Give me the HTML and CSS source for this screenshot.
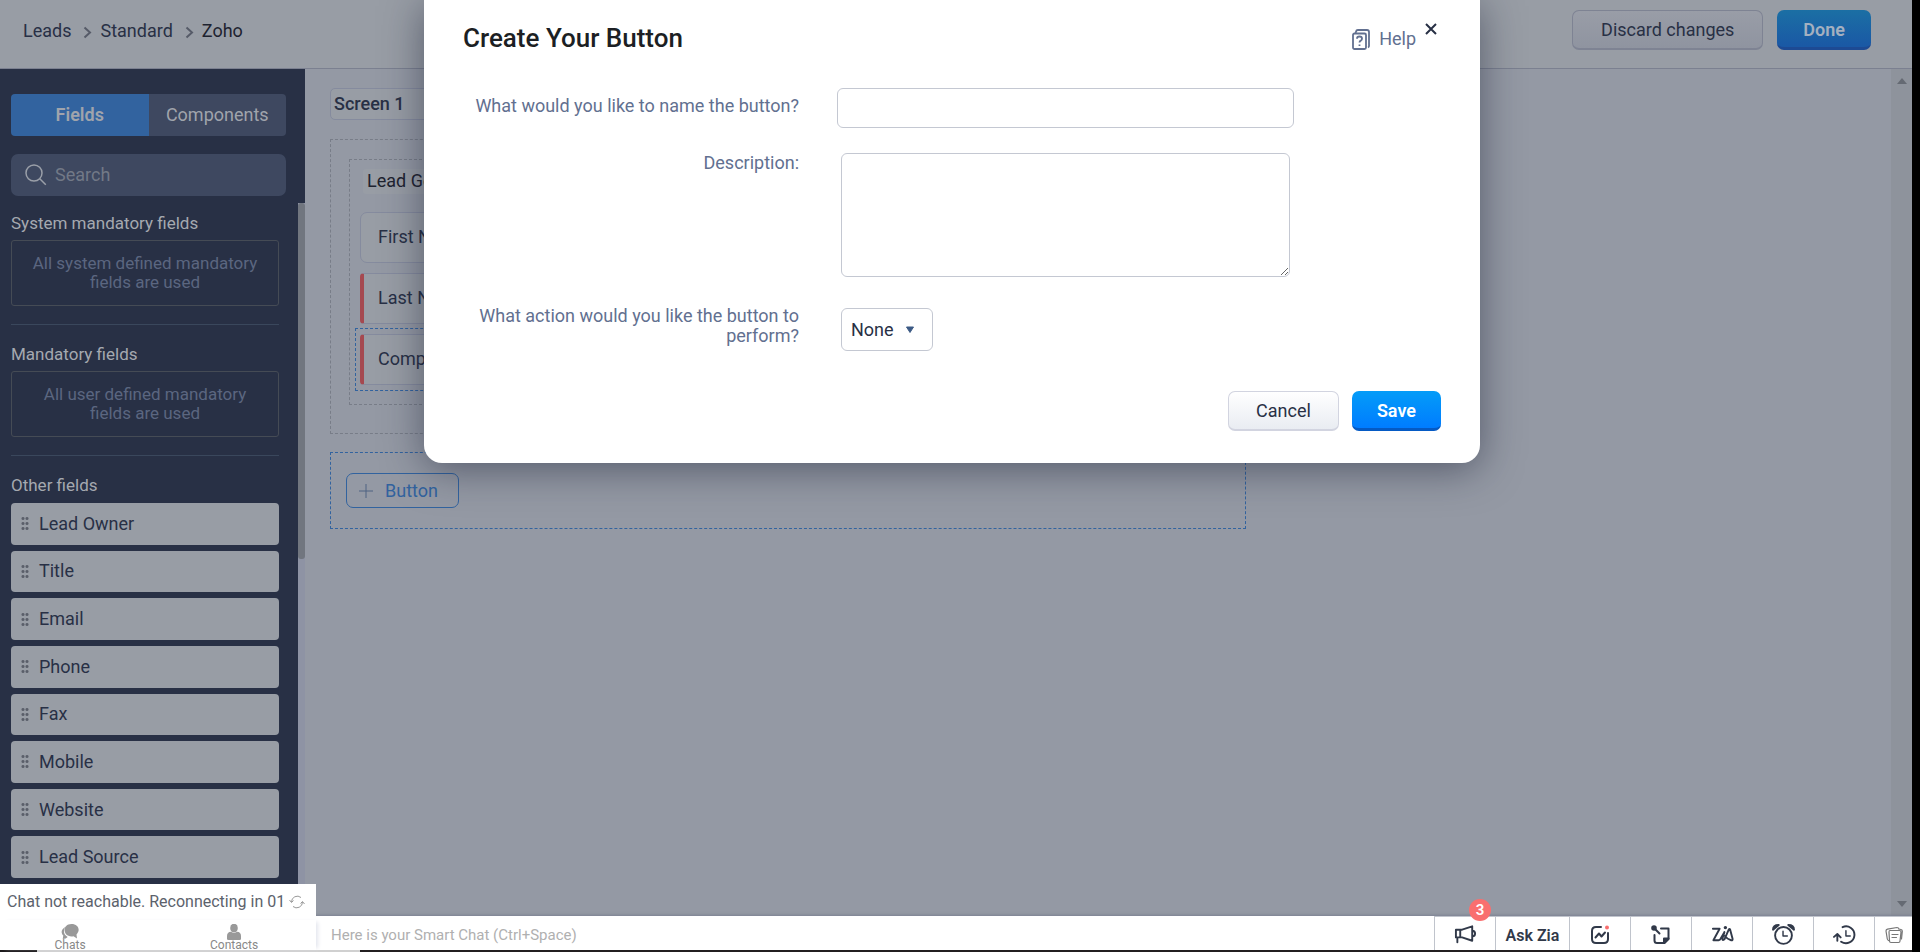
FILE: index.html
```html
<!DOCTYPE html>
<html lang="en">
<head>
<meta charset="utf-8">
<title>Create Your Button</title>
<link rel="stylesheet" href="styles.css">
</head>
<body>
<div class="app">
  <header class="topbar">
    <nav class="crumbs" aria-label="Breadcrumb">
      <a href="#">Leads</a>
      <svg class="chevron" viewBox="0 0 9 13"><path d="M1.500 1.500l5.500 5-5.500 5"/></svg>
      <a href="#">Standard</a>
      <svg class="chevron" viewBox="0 0 9 13"><path d="M1.500 1.500l5.500 5-5.500 5"/></svg>
      <a class="current" href="#">Zoho</a>
    </nav>
    <div class="topbar-actions">
      <button class="btn-discard" type="button">Discard changes</button>
      <button class="btn-done" type="button">Done</button>
    </div>
  </header>

  <div class="workspace">
    <aside class="sidebar">
      <div class="sidebar-head">
        <div class="tabs">
          <button class="tab active" type="button">Fields</button>
          <button class="tab" type="button">Components</button>
        </div>
        <label class="search">
          <svg viewBox="0 0 22 22"><circle cx="9" cy="9" r="8"/><path d="M14.800 14.800l6 6"/></svg>
          <input type="search" placeholder="Search" aria-label="Search">
        </label>
      </div>
      <div class="sidebar-body">
        <div class="field-groups">
          <section class="group">
            <h2>System mandatory fields</h2>
            <p class="empty">All system defined mandatory fields are used</p>
          </section>
          <section class="group">
            <h2>Mandatory fields</h2>
            <p class="empty">All user defined mandatory fields are used</p>
          </section>
          <section class="group others">
            <h2>Other fields</h2>
            <ul class="field-list">
              <li><i class="grip"></i>Lead Owner</li>
              <li><i class="grip"></i>Title</li>
              <li><i class="grip"></i>Email</li>
              <li><i class="grip"></i>Phone</li>
              <li><i class="grip"></i>Fax</li>
              <li><i class="grip"></i>Mobile</li>
              <li><i class="grip"></i>Website</li>
              <li><i class="grip"></i>Lead Source</li>
            </ul>
          </section>
        </div>
        <div class="side-scroll"><div class="side-thumb"></div></div>
      </div>
    </aside>

    <main class="canvas">
      <div class="canvas-inner">
        <input class="screen-name" type="text" value="Screen 1" aria-label="Screen name">
        <section class="zone">
          <div class="zone-inner">
            <h3 class="zone-title">Lead Generation</h3>
            <div class="slot"><div class="field">First Name</div></div>
            <div class="slot"><div class="field required">Last Name</div></div>
            <div class="slot selected"><div class="field required">Company</div></div>
          </div>
        </section>
        <section class="zone-buttons">
          <button class="add-button" type="button">
            <svg viewBox="0 0 14 14"><path d="M7 0v14M0 7h14"/></svg>Button
          </button>
        </section>
      </div>
      <div class="page-scroll">
        <svg viewBox="0 0 10 6"><path d="M0 6l5-6 5 6z"/></svg>
        <svg viewBox="0 0 10 6"><path d="M0 0l5 6 5-6z"/></svg>
      </div>
    </main>
  </div>

  <footer class="dock">
    <input class="smart-chat" type="text" placeholder="Here is your Smart Chat (Ctrl+Space)" aria-label="Smart Chat">
    <div class="dock-tools">
      <button class="tool announce" type="button" aria-label="Announcements">
        <svg viewBox="0 0 24 20"><path d="M2 5h6.500L19 1.500v15L8.500 13H2zM6.500 5v8M3.500 13v5M19 6c4 0 4 6 0 6"/></svg>
        <span class="badge">3</span>
      </button>
      <button class="tool zia-text" type="button">Ask Zia</button>
      <button class="tool" type="button" aria-label="Insights">
        <svg viewBox="0 0 20 20"><path d="M11 2H6Q2 2 2 6v8q0 4 4 4h8q4 0 4-4V8M5.500 12.500l3.500-4 2.500 3 3.500-4"/><circle class="dot" cx="17" cy="2.500" r="2"/></svg>
      </button>
      <button class="tool" type="button" aria-label="Sticky notes">
        <svg viewBox="0 0 20 20"><path d="M10 3.500h7.500V14l-4 4H6q-2.500 0-2.500-2.500V10M3 3l5.500 5.500"/><path class="solid" d="M17.500 13.500h-4.500v4.500z"/><circle class="solid" cx="3" cy="3" r="1.800"/></svg>
      </button>
      <button class="tool" type="button" aria-label="Zia">
        <svg class="wide" viewBox="0 0 24 20"><path d="M2 4h7L2.500 16H8q1.500 0 2-1.500L14 7.500l-2 6.500q-.5 3 2 1L18.500 5q.8-1.500 1.500 0l2.500 9.500q.3 2-1.500 1.500-4-1-6.500-4.500"/><circle class="solid" cx="15" cy="2.800" r=".8"/></svg>
      </button>
      <button class="tool" type="button" aria-label="Reminders">
        <svg class="wide" viewBox="0 0 24 22"><circle cx="12" cy="12" r="8.800"/><path class="thin" d="M11.500 7.500v5h4.500"/><path class="solid" d="M1 6q0-5 6-5zM23 6q0-5-6-5z"/></svg>
      </button>
      <button class="tool" type="button" aria-label="Recent">
        <svg class="wide" viewBox="0 0 24 22"><path d="M10 3.300A8.800 8.800 0 1 1 8.500 18.500M4.500 17.500V11M1 13.500L4.500 10.500 8 14"/><path class="thin" d="M13.500 7v5.500H18"/></svg>
      </button>
      <button class="tool notes" type="button" aria-label="Notes">
        <svg viewBox="0 0 18 18"><path d="M5 4.500h9.500q1.500 0 1.500 1.500l-1 9q0 1.500-1.500 1.500H6Q4.500 16.500 4.500 15l-.5-9q0-1.500 1-1.500zM3.500 14.500Q2.500 14 2.300 13L1 5Q1 3.500 2.500 3.200L12 1.500q1.500 0 2 1.500M13.500 3l2.500 .5q1.500 .5 1.300 2L16.500 13M7 8.500h6M7 11.500h4.500"/></svg>
      </button>
    </div>
  </footer>

  <aside class="chat-panel">
    <p class="chat-status">Chat not reachable. Reconnecting in 01
      <svg viewBox="0 0 16 16"><path d="M2.500 8A5.800 5.800 0 0 1 12 3.500M13.500 8A5.800 5.800 0 0 1 4 12.500M.5 6l2 2.500 2-2M11.500 9.500l2-2 2 2.500"/></svg>
    </p>
    <div class="chat-tabs">
      <a href="#"><svg viewBox="0 0 18 16"><path d="M4.300 3C-1 6 .5 10 2.300 11.500L1.700 15q3.500 0 5-2C2.500 11 2 6.500 4.300 3z"/><path d="M10.500 0C1 0 1.500 12.500 10.500 12.500q1 0 2-.2L16 14.500l-.5-4C20 6 17 0 10.500 0z"/></svg>Chats</a>
      <a href="#"><svg viewBox="0 0 18 16"><ellipse cx="9" cy="4" rx="3.800" ry="4.200"/><path d="M2 15v-3q0-4 4-4.200 3 2 6 0 4 .2 4 4.200v3q0 1-1.500 1h-11Q2 16 2 15z"/></svg>Contacts</a>
    </div>
  </aside>
  <div class="taskbar-edge"></div>

  <div class="overlay">
    <form class="dialog" role="dialog" aria-labelledby="dialog-title">
      <header class="dialog-head">
        <h1 id="dialog-title">Create Your Button</h1>
        <a class="help" href="#">
          <svg viewBox="0 0 18 21"><rect x="1" y="4.500" width="13" height="15.500" rx="1.500"/><path d="M3.500 4L4.500 1.500Q5 1 6 1h9q2 0 2 2v14q0 1-1 1.500M5 9.800q0-2.300 2.500-2.300t2.500 2.300q0 1.200-1.200 1.800-1.300 .6-1.300 1.900M7.500 15.500v1.500"/></svg>
          Help
        </a>
        <button class="close" type="button" aria-label="Close">
          <svg viewBox="0 0 12 12"><path d="M1 1l10 10M11 1L1 11"/></svg>
        </button>
      </header>
      <div class="row">
        <label for="btn-name">What would you like to name the button?</label>
        <input id="btn-name" class="name-input" type="text">
      </div>
      <div class="row">
        <label for="btn-desc">Description:</label>
        <textarea id="btn-desc" class="desc-input"></textarea>
      </div>
      <div class="row row-action">
        <label for="btn-action">What action would you like the button to perform?</label>
        <div class="select-wrap">
          <select id="btn-action"><option>None</option></select>
          <svg viewBox="0 0 10 8"><path d="M1.500 1h7L5 6.500z"/></svg>
        </div>
      </div>
      <div class="dialog-actions">
        <button class="btn-cancel" type="button">Cancel</button>
        <button class="btn-save" type="submit">Save</button>
      </div>
    </form>
  </div>
</div>
</body>
</html>
```

FILE: styles.css
```css
* { box-sizing: border-box; }

body {
  margin: 0;
  background: #000;
  color: #283045;
  font-family: Roboto, "Liberation Sans", sans-serif;
  font-size: 18px;
  line-height: 20px;
}

button, input, select, textarea { font: inherit; color: inherit; margin: 0; }
h1, h2, h3, p, ul { margin: 0; padding: 0; font-weight: 500; }
a { color: inherit; text-decoration: none; }
svg { display: block; fill: none; stroke: currentColor; flex: none; }

.app {
  position: relative;
  display: flex;
  flex-direction: column;
  height: 100vh;
  margin-right: 8px;
  overflow: hidden;
  background: #9499a4;
}

/* top bar */
.topbar {
  display: flex;
  justify-content: space-between;
  align-items: flex-start;
  flex: none;
  height: 69px;
  padding: 10px 41px 0 23px;
  background: #989da5;
  border-bottom: 1px solid #7b8090;
}
.crumbs { display: flex; align-items: center; height: 42px; }
.crumbs .current { color: #1e2330; }
.chevron { width: 9px; height: 13px; margin: 2px 8px 0 12px; stroke: #565b68; stroke-width: 2; }
.topbar-actions { display: flex; gap: 14px; }
.btn-discard, .btn-done { height: 40px; border-radius: 7px; }
.btn-discard {
  padding: 0 28px;
  background: linear-gradient(#999da7, #8f94a0);
  border: 1px solid #7e8393;
  border-bottom-width: 2px;
}
.btn-done {
  padding: 2px 26px 0;
  border: 0;
  border-bottom: 3px solid #1d4a93;
  background: linear-gradient(#1b6fa4, #1a58a5);
  color: #a4b0c0;
  font-weight: 600;
}

.workspace { display: flex; flex: 1; min-height: 0; }

/* sidebar */
.sidebar {
  display: flex;
  flex-direction: column;
  width: 305px;
  flex: none;
  background: #283045;
}
.sidebar-head { padding: 25px 19px 7px 11px; }
.tabs { display: flex; border-radius: 4px; overflow: hidden; }
.tab {
  flex: 1;
  height: 42px;
  padding: 0;
  border: 0;
  background: #3e4860;
  color: #a0a4ac;
}
.tab.active { background: #32639f; font-weight: 600; }
.search {
  display: flex;
  align-items: center;
  height: 42px;
  margin-top: 18px;
  padding: 0 14px;
  gap: 8px;
  border-radius: 7px;
  background: #3e4860;
}
.search svg { width: 22px; height: 22px; stroke: #9a9fa8; stroke-width: 1.500; }
.search input { flex: 1; min-width: 0; padding: 0; border: 0; outline: 0; background: none; }
.search input::placeholder { color: #727987; }

.sidebar-body { display: flex; flex: 1; min-height: 0; }
.field-groups {
  display: flex;
  flex-direction: column;
  flex: 1;
  padding: 9px 19px 38px 11px;
}
.group { border-bottom: 1px solid #3a475c; margin-bottom: 18px; padding-bottom: 18px; }
.group h2 { height: 28px; padding-top: 1px; font-size: 17px; line-height: 20px; font-weight: 400; color: #a5a9b0; }
.empty {
  height: 66px;
  padding: 13px 16px;
  border: 1px solid #454b55;
  border-radius: 3px;
  color: #5b6680;
  font-size: 17px;
  font-weight: 400;
  line-height: 19px;
  text-align: center;
}
.group.others { display: flex; flex-direction: column; flex: 1; border: 0; margin: 0; padding: 0; }
.group.others h2 { height: 29px; }
.field-list { display: flex; flex-direction: column; flex: 1; gap: 6px; list-style: none; }
.field-list li {
  display: flex;
  align-items: center;
  flex: 1;
  gap: 10px;
  padding-left: 10px;
  border-radius: 4px;
  background: #989da5;
  font-weight: 400;
}
.grip {
  width: 8px;
  height: 15px;
  background: radial-gradient(circle at 50% 50%, #5a5f6a 1px, transparent 2px) 0 0 / 4px 5px;
}
.side-scroll { width: 7px; background: #8e93a4; }
.side-thumb { height: 53%; max-height: 356px; background: #71767f; border-radius: 3px; }

/* canvas */
.canvas { display: flex; flex: 1; min-width: 0; }
.canvas-inner { flex: 1; padding: 19px 0 0 25px; }
.screen-name {
  display: block;
  width: 240px;
  height: 32px;
  padding: 0 3px 2px;
  border: 1px solid #858b9e;
  border-radius: 5px;
  background: #989da5;
  font-weight: 500;
}
.zone, .zone-buttons { width: 916px; max-width: 96%; }
.zone { margin-top: 19px; padding: 19px 18px 28px; border: 1px dashed #787d88; }
.zone-inner { padding: 9px 6px 15px 5px; border: 1px dashed #787d88; }
.zone-title {
  width: 220px;
  height: 25px;
  margin: 0 0 12px 8px;
  padding: 2px 4px;
  border-radius: 3px;
  background: #989da5;
  color: #1e2330;
  font-size: 18px;
  font-weight: 400;
}
.slot { margin-bottom: -2px; padding: 5px 4px; border: 1px dashed transparent; }
.slot.selected { border-color: #32639f; }
.field {
  height: 51px;
  padding: 14px 17px;
  border: 1px solid #858b9e;
  border-radius: 7px;
  background: #989da5;
}
.field.required { padding-left: 14px; border-left: 4px solid #a54950; border-radius: 4px; }
.zone-buttons { margin-top: 18px; padding: 20px 15px; border: 1px dashed #32639f; }
.add-button {
  display: flex;
  align-items: center;
  gap: 12px;
  height: 35px;
  padding: 0 20px 0 12px;
  border: 1px solid #32639f;
  border-radius: 7px;
  background: none;
  color: #32639f;
}
.add-button svg { width: 14px; height: 14px; stroke: #4f6282; }
.page-scroll {
  display: flex;
  flex-direction: column;
  justify-content: space-between;
  align-items: center;
  width: 21px;
  padding: 9px 0;
  background: #8e939c;
}
.page-scroll svg { width: 10px; height: 6px; fill: #656a73; stroke: none; }

/* bottom dock */
.dock {
  display: flex;
  flex: none;
  height: 34px;
  padding-left: 331px;
  background: #fff;
  box-shadow: 0 -1px 3px #7b8090;
}
.smart-chat { flex: 1; padding: 4px 0 0; border: 0; outline: 0; background: none; font-size: 15px; }
.smart-chat::placeholder { color: #b0b0b0; }
.dock-tools { display: flex; border-top: 1px solid #c0c4cc; }
.tool {
  position: relative;
  display: flex;
  justify-content: center;
  align-items: center;
  width: 61px;
  padding: 2px 0 0;
  border: 0;
  border-left: 1px solid #c0c4cc;
  background: #fff;
  color: #313949;
}
.tool svg { width: 20px; height: 20px; stroke-width: 2; stroke-linecap: round; stroke-linejoin: round; }
.tool.announce svg, .tool svg.wide { width: 23px; height: 21px; }
.tool .solid { fill: currentColor; }
.tool .thin { stroke-width: 1.500; }
.tool .dot { fill: #f96f6f; stroke: none; }
.tool.zia-text { width: 74px; font-size: 16px; font-weight: 600; padding-top: 4px; }
.tool.notes { width: 38px; color: #777; }
.tool.notes svg { width: 18px; height: 18px; stroke-width: 1.200; }
.badge {
  position: absolute;
  top: -18px;
  right: 4px;
  width: 22px;
  height: 22px;
  border-radius: 50%;
  background: #f96f6f;
  color: #fff;
  font-size: 15px;
  font-weight: 600;
  line-height: 22px;
  text-align: center;
}

.chat-panel {
  position: absolute;
  left: 0;
  bottom: 2px;
  width: 316px;
  background: #fff;
}
.chat-status {
  display: flex;
  align-items: center;
  gap: 4px;
  height: 36px;
  padding-left: 7px;
  color: #5c626c;
  font-size: 16px;
  font-weight: 400;
}
.chat-status svg { width: 16px; height: 16px; stroke: #999; }
.chat-tabs { display: flex; height: 30px; box-shadow: 4px 0 4px -2px #e4e6ee; }
.chat-tabs a {
  display: flex;
  flex-direction: column;
  align-items: center;
  width: 166px;
  padding-top: 4px;
  color: #888;
  font-size: 12px;
  line-height: 10px;
}
.chat-tabs a:first-child { width: 154px; padding-right: 12px; }
.chat-tabs svg { width: 18px; height: 16px; fill: #999; stroke: none; }
.taskbar-edge {
  flex: none;
  height: 2px;
  background: linear-gradient(90deg, #1d1a1c 37px, #d0d0d0 37px, #d0d0d0 360px, #231f20 360px);
}

/* dialog */
.overlay {
  position: absolute;
  inset: 0 8px auto 0;
  display: flex;
  justify-content: center;
}
.dialog {
  width: 1056px;
  max-width: 90%;
  padding: 22px 39px 32px;
  border-radius: 0 0 18px 18px;
  background: #fff;
  box-shadow: 0 6px 40px rgba(20, 26, 48, 0.5);
}
.dialog-head { display: flex; align-items: flex-start; height: 66px; }
.dialog h1 { flex: 1; color: #1c1f24; font-size: 26px; line-height: 32px; }
.help { display: flex; gap: 9px; padding-top: 7px; color: #627090; }
.help svg { width: 18px; height: 21px; stroke-width: 1.800; }
.close { padding: 1px 4px 0 9px; border: 0; background: none; color: #283045; }
.close svg { width: 12px; height: 12px; stroke-width: 2; }
.row { display: flex; align-items: flex-start; margin-bottom: 25px; color: #627090; }
.row label { width: 336px; margin-right: 42px; text-align: right; }
.row:first-of-type label { padding-top: 8px; }
.name-input, .desc-input, .select-wrap select {
  border: 1px solid #c4c8d2;
  border-radius: 6px;
  background: #fff;
}
.name-input { width: 457px; height: 40px; margin-left: -4px; }
.desc-input { width: 449px; height: 124px; }
.row-action { margin-top: 29px; }
.select-wrap { display: grid; align-items: center; width: 92px; margin-top: 2px; }
.select-wrap > * { grid-area: 1 / 1; }
.select-wrap select { appearance: none; height: 43px; padding: 0 9px; color: #283045; }
.select-wrap svg { width: 10px; height: 8px; margin-left: 64px; fill: #3c5a85; stroke: #3c5a85; pointer-events: none; }
.dialog-actions { display: flex; justify-content: flex-end; gap: 13px; margin-top: 40px; }
.btn-cancel, .btn-save { height: 40px; border-radius: 7px; }
.btn-cancel {
  padding: 0 27px;
  border: 1px solid #d2d4e0;
  border-bottom-width: 2px;
  background: linear-gradient(#fff, #e9ecf2);
}
.btn-save {
  padding: 2px 25px 0;
  border: 0;
  border-bottom: 3px solid #055ac4;
  background: linear-gradient(#049cf8, #007cff);
  color: #fff;
  font-weight: 600;
}
```
